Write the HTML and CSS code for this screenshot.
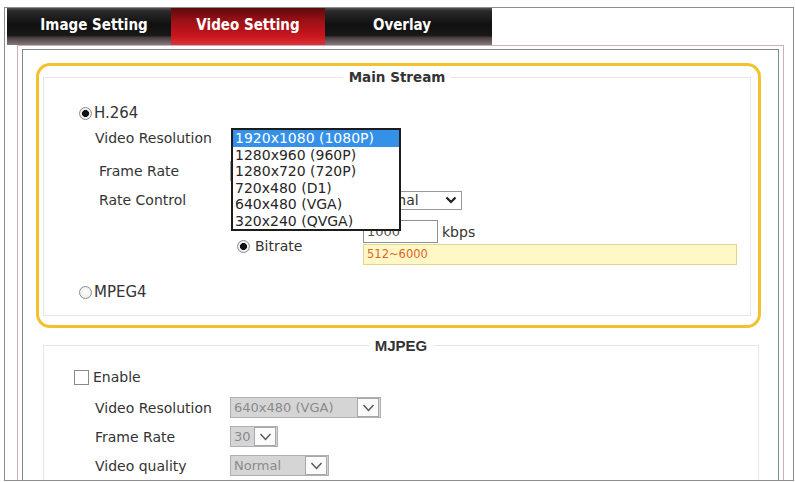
FILE: index.html
```html
<!DOCTYPE html>
<html lang="en">
<head>
    <meta charset="UTF-8">
    <meta name="viewport" content="width=device-width, initial-scale=1.0">
    <title>Video Setting</title>
    <link rel="stylesheet" href="styles.css">
</head>
<body>
    <div class="frame">
        <!-- Tabs -->
        <div class="tabs">
            <div class="tab">Image Setting</div>
            <div class="tab active">Video Setting</div>
            <div class="tab">Overlay</div>
        </div>

        <div class="panel">
            <div class="inner">

                <!-- Main stream (highlighted) -->
                <div class="stream-box">
                    <fieldset class="group main-group">
                        <legend class="group-title">Main Stream</legend>

                        <div class="opt-row first">
                            <input type="radio" class="radio" name="codec" checked>
                            <span class="opt-label">H.264</span>
                        </div>

                        <div class="field-row row-vr">
                            <span class="field-label">Video Resolution</span>
                            <div class="select-wrap">
                                <!-- closed select sits under the open list -->
                                <div class="select res-select"></div>
                                <div class="dropdown">
                                    <div class="option selected">1920x1080 (1080P)</div>
                                    <div class="option">1280x960 (960P)</div>
                                    <div class="option">1280x720 (720P)</div>
                                    <div class="option">720x480 (D1)</div>
                                    <div class="option">640x480 (VGA)</div>
                                    <div class="option">320x240 (QVGA)</div>
                                </div>
                            </div>
                        </div>

                        <div class="field-row row-fr">
                            <span class="field-label indent">Frame Rate</span>
                            <div class="select fr-select"></div>
                        </div>

                        <div class="field-row row-rc">
                            <span class="field-label indent">Rate Control</span>
                            <div class="select rc-select">
                                <span class="select-text">Normal</span>
                                <svg class="chevron" width="12" height="8" viewBox="0 0 12 8"><polyline points="1.5,1.5 6,6 10.5,1.5" fill="none" stroke="#1e1e1e" stroke-width="2.2"/></svg>
                            </div>
                        </div>

                        <div class="rate-row">
                            <div class="rate-choice">
                                <input type="radio" class="radio" name="rate" checked>
                                <span>Bitrate</span>
                            </div>
                            <div class="rate-value">
                                <div class="value-line">
                                    <input type="text" class="num-input" value="1000">
                                    <span>kbps</span>
                                </div>
                                <div class="tip">512~6000</div>
                            </div>
                        </div>

                        <div class="opt-row last">
                            <input type="radio" class="radio" name="codec">
                            <span class="opt-label">MPEG4</span>
                        </div>
                    </fieldset>
                </div>

                <!-- MJPEG -->
                <fieldset class="group mjpeg-group">
                    <legend class="group-title mjpeg-title">MJPEG</legend>

                    <div class="check-row">
                        <input type="checkbox" class="checkbox">
                        <span>Enable</span>
                    </div>

                    <div class="field-row m-row first">
                        <span class="field-label">Video Resolution</span>
                        <div class="select disabled w-res">
                            <span class="select-text">640x480 (VGA)</span>
                            <span class="select-btn"><svg width="13" height="8" viewBox="0 0 13 8"><polyline points="1.5,1 6.5,6.5 11.5,1" fill="none" stroke="#555" stroke-width="1.4"/></svg></span>
                        </div>
                    </div>

                    <div class="field-row m-row">
                        <span class="field-label">Frame Rate</span>
                        <div class="select disabled w-fr">
                            <span class="select-text">30</span>
                            <span class="select-btn"><svg width="13" height="8" viewBox="0 0 13 8"><polyline points="1.5,1 6.5,6.5 11.5,1" fill="none" stroke="#555" stroke-width="1.4"/></svg></span>
                        </div>
                    </div>

                    <div class="field-row m-row">
                        <span class="field-label">Video quality</span>
                        <div class="select disabled w-q">
                            <span class="select-text">Normal</span>
                            <span class="select-btn"><svg width="13" height="8" viewBox="0 0 13 8"><polyline points="1.5,1 6.5,6.5 11.5,1" fill="none" stroke="#555" stroke-width="1.4"/></svg></span>
                        </div>
                    </div>
                </fieldset>

            </div>
        </div>
    </div>
</body>
</html>
```

FILE: styles.css
```css
body {
    margin: 0;
    background-color: #fff;
    font-family: "DejaVu Sans", Verdana, sans-serif;
    font-size: 14px;
    color: #333;
}
.frame {
    margin: 7px 0 0 4px;
    width: 788px;
    height: 472px;
    border: 1px solid #8c8c8c;
    overflow: hidden;
}

/* Tabs */
.tabs {
    display: flex;
    box-sizing: border-box;
    width: 485px;
    height: 37px;
    margin-left: 2px;
    padding-left: 10px;
    background: linear-gradient(#505050 0, #2a2a2a 8%, #101010 45%, #181818 74%, #4a3f40 80%, #85777a 100%);
}
.tab {
    width: 154px;
    display: flex;
    align-items: center;
    justify-content: center;
    padding-bottom: 3px;
    box-sizing: border-box;
    color: #fff;
    font-family: "DejaVu Sans Condensed", "DejaVu Sans", sans-serif;
    font-stretch: condensed;
    font-weight: bold;
    font-size: 15px;
}
.tab.active {
    background: linear-gradient(#5e0a0d 0, #9c1016 35%, #c2141c 70%, #cf1c24 82%, #d9343b 100%);
}

/* Panel with double border */
.panel {
    margin: 0 9px 0 12px;
    border: 1px solid #cdb0b5;
    padding: 3px 4px 0;
    height: 500px;
}
.inner {
    border: 1px solid #7f8b8a;
    height: 600px;
    overflow: hidden;
}

/* Highlighted main stream */
.stream-box {
    box-sizing: border-box;
    height: 265px;
    margin: 13px 17px 0 13px;
    border: 3px solid #f2c12e;
    border-radius: 14px;
    padding-top: 3px;
}
.group {
    margin: 0;
    padding: 0;
    border: 1px solid #e6e6e6;
    min-width: 0;
}
.main-group {
    margin: 0 7px 0 4px;
    box-sizing: border-box;
    height: 247px;
}
.group-title {
    margin: 0 auto;
    padding: 0 6px;
    line-height: 16px;
    font-size: 13.5px;
    font-weight: bold;
    color: #333;
}
.mjpeg-title {
    font-family: "Liberation Sans", Arial, sans-serif;
    font-size: 15px;
    line-height: 17px;
}

/* Rows */
.opt-row {
    display: flex;
    align-items: center;
    gap: 2px;
    height: 20px;
    padding-left: 35px;
}
.opt-row.first { margin-top: 18px; }
.opt-row.last { margin-top: 18px; }
.opt-label { font-size: 15px; }

.field-row {
    display: flex;
    align-items: center;
    height: 20px;
    padding-left: 51px;
}
.field-label {
    width: 135px;
    flex-shrink: 0;
}
.field-label.indent { padding-left: 4px; box-sizing: border-box; }
.row-vr { margin-top: 5px; }
.row-fr { margin-top: 13px; }
.row-rc { margin-top: 9px; }

/* Radio / checkbox */
.radio {
    appearance: none;
    margin: 0;
    width: 13px;
    height: 13px;
    border: 1px solid #8d8d8d;
    border-radius: 50%;
    background: radial-gradient(circle, #fff 0, #e8e8e8 100%);
}
.radio:checked {
    background: radial-gradient(circle, #111 0 3.2px, #f2f2f2 3.8px, #e2e2e2 100%);
}
.checkbox {
    appearance: none;
    margin: 0;
    width: 15px;
    height: 15px;
    border: 1px solid #8a8a8a;
    background-color: #fff;
}

/* Selects */
.select {
    display: flex;
    align-items: center;
    box-sizing: border-box;
    height: 20px;
    border: 1px solid #a5a5a5;
    background-color: #fff;
    font-size: 13px;
}
.select-text {
    flex: 1;
    padding-left: 3px;
    white-space: nowrap;
}
.select-wrap {
    position: relative;
    width: 170px;
    height: 20px;
    margin-left: 1px;
}
.res-select { width: 170px; }
.fr-select { width: 50px; }
.rc-select {
    width: 99px;
    height: 19px;
    margin-left: 133px;
    border-color: #9a9a9a;
    font-size: 14px;
    padding-right: 4px;
}
.rc-select .select-text { padding-left: 4px; }
.chevron { flex-shrink: 0; }

.dropdown {
    position: absolute;
    top: 0;
    left: 0;
    z-index: 2;
    box-sizing: border-box;
    width: 170px;
    border: 2px solid #1c1c1c;
    background-color: #fff;
    color: #262626;
}
.option {
    height: 16.5px;
    line-height: 16.5px;
    padding-left: 2px;
    white-space: nowrap;
}
.option.selected {
    background-color: #3591e8;
    color: #fff;
}

/* Bitrate */
.rate-row {
    display: flex;
    height: 44px;
    margin-top: 10px;
    padding-left: 193px;
}
.rate-choice {
    width: 126px;
    height: 20px;
    margin-top: 16px;
    display: flex;
    align-items: center;
    gap: 5px;
}
.value-line {
    display: flex;
    align-items: center;
    gap: 4px;
}
.num-input {
    box-sizing: border-box;
    width: 75px;
    height: 23px;
    margin: 0;
    padding: 0 3px;
    border: 1px solid #8f8f8f;
    font-family: inherit;
    font-size: 13px;
    color: #555;
}
.tip {
    box-sizing: border-box;
    width: 374px;
    height: 21px;
    margin-top: 1px;
    padding-left: 3px;
    border: 1px solid #e4d48c;
    background-color: #fff7c6;
    color: #e0642a;
    font-size: 11.5px;
    line-height: 19px;
}

/* MJPEG */
.mjpeg-group {
    margin: 9px 19px 0 20px;
    height: 200px;
}
.check-row {
    display: flex;
    align-items: center;
    gap: 4px;
    height: 20px;
    margin-top: 13px;
    padding-left: 30px;
}
.m-row { height: 21px; margin-top: 8px; }
.m-row.first { margin-top: 10px; }
.select.disabled {
    height: 21px;
    background-color: #d5d5d5;
    border-color: #b0b0b0;
    color: #8a8a8a;
}
.select-btn {
    display: flex;
    align-items: center;
    justify-content: center;
    box-sizing: border-box;
    width: 22px;
    height: 19px;
    margin-right: 1px;
    border: 1px solid #a8a8a8;
    background-color: #fbfbfb;
}
.w-res { width: 151px; }
.w-fr { width: 48px; }
.w-q { width: 99px; }
```
